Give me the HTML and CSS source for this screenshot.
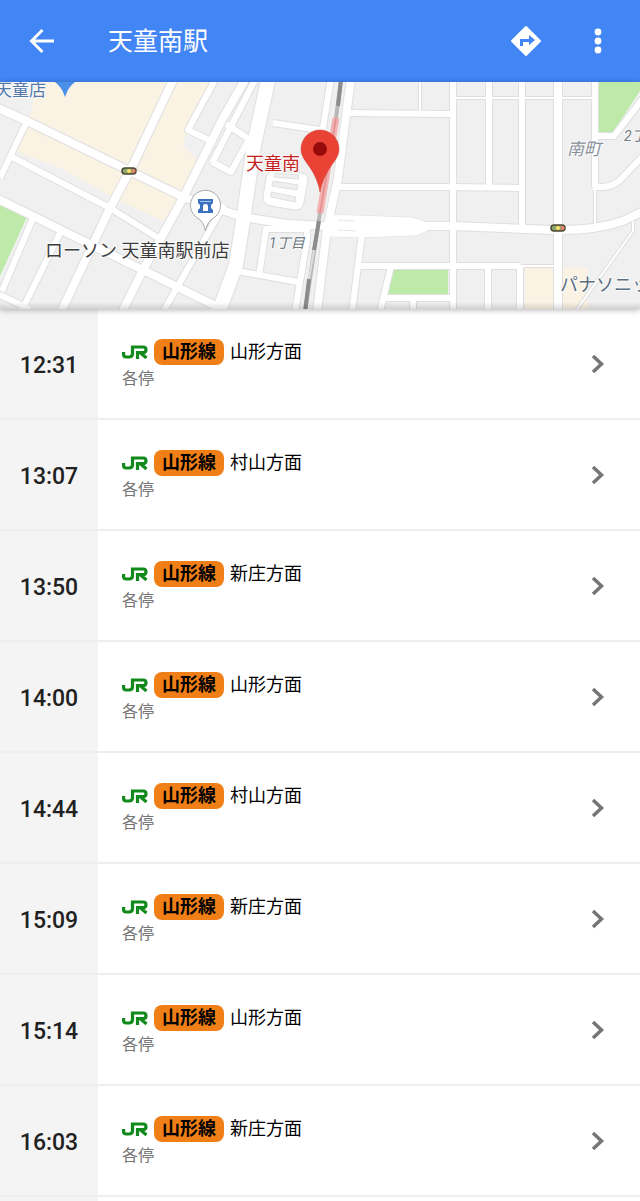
FILE: index.html
```
<!doctype html>
<html lang="ja">
<head>
  <meta charset="utf-8">
  <meta name="viewport" content="width=device-width, initial-scale=1.0">
  <title>天童南駅</title>
  <link rel="stylesheet" href="styles.css">
</head>
<body>

<header class="toolbar">
  <button class="icon-btn" type="button" aria-label="戻る">
    <svg width="28" height="28" viewBox="0 0 28 28" fill="none" stroke="#fff" stroke-width="3"><path d="M26 14H4M14.500 3L3.500 14l11 11"/></svg>
  </button>
  <h1 class="toolbar-title">天童南駅</h1>
  <button class="icon-btn" type="button" aria-label="経路">
    <svg width="32" height="32" viewBox="0 0 32 32"><path fill="#fff" stroke="#fff" stroke-width="2" stroke-linejoin="round" d="M16 2l14 14-14 14L2 16z"/><path fill="#4285f4" d="M10 21v-7h9v-4l6 5-6 5v-3h-6v4z"/></svg>
  </button>
  <button class="icon-btn icon-btn-last" type="button" aria-label="メニュー">
    <svg width="28" height="28" viewBox="0 0 28 28" fill="#fff"><circle cx="14" cy="5" r="3.400"/><circle cx="14" cy="14" r="3.400"/><circle cx="14" cy="23" r="3.400"/></svg>
  </button>
</header>

<div class="map">
  <svg class="map-canvas" viewBox="0 82 640 227" preserveAspectRatio="xMidYMid slice" role="img" aria-label="天童南駅周辺の地図">
    <defs>
      <!-- streets, grouped by width -->
      <g id="lanes">
        <path d="M420 82V112M456 98H593M595 186V226M522 266H556M633 221V231L575 312"/>
      </g>
      <g id="streets">
        <path d="M27 121L0 178M10 156L110 208 163 241M33 218L2 291M60 233L22 310M0 295L30 309M224 205L163 312"/>
        <path d="M216 78L188 130 215 143M212 162L231 172 249 139 226 124M212 163L256 78"/>
        <path d="M273 123L320 130M331 78L322 134M347 113L450 114M337 187H450L520 188"/>
        <path d="M453 80V312M489 80V187M522 80V228M595 80V187M593 187H602Q612 187 620 180L644 155M595 136H614L644 97"/>
        <path d="M362 234L352 312M356 266H520M391 266L380 312M383 298H453M488 266V312M520 266V312M413 298V312"/>
        <path d="M266 229L259 276M237 271L298 282M264 229H307V240L295 312"/>
      </g>
      <g id="roads">
        <path d="M-4 107L27 121 183 197 243 217 287 224 327 226H420L453 226 553 230Q594 231 623 221L644 211"/>
        <path d="M174 78L133 165 110 208 60 314M222 120L183 198 160 240 143 270 122 312M-4 198L33 216 67 233 143 270 224 310M222 120L246 78"/>
        <path d="M351 78L338 178 327 228 317 312M558 78V312"/>
      </g>
      <g id="avenue">
        <path d="M269 76L254 145 243 221 236 265 218 314"/>
      </g>
      <linearGradient id="dim" x1="0" y1="0" x2="0" y2="1">
        <stop offset="0" stop-color="#000" stop-opacity="0"/>
        <stop offset="1" stop-color="#000" stop-opacity=".15"/>
      </linearGradient>
    </defs>

    <rect y="82" width="640" height="228" fill="#f0f0f0"/>

    <!-- shops and parks -->
    <path fill="#faf3e4" d="M37 82H212L188 128 183 146 198 160 180 200 163 221 120 201 60 168 15 151 31 112z"/>
    <path fill="#faf3e4" d="M525 268h30v42h-30zM562 268h26v42h-26z"/>
    <path fill="#bdeaa9" d="M0 203L27 217 0 276zM598 82h42v9l-27 41h-15zM392 270h56v25h-60z"/>

    <!-- casing first, then white fill -->
    <g class="casing">
      <use href="#lanes" stroke-width="4"/>
      <use href="#streets" stroke-width="8"/>
      <use href="#roads" stroke-width="10"/>
      <use href="#avenue" stroke-width="16"/>
      <path d="M332 215L412 218 428 223V230L416 235 360 237 330 236z" stroke-width="2"/>
    </g>
    <g class="surface">
      <use href="#lanes" stroke-width="2"/>
      <use href="#streets" stroke-width="6"/>
      <use href="#roads" stroke-width="8"/>
      <use href="#avenue" stroke-width="14"/>
      <path d="M332 215L412 218 428 223V230L416 235 360 237 330 236z" fill="#fff"/>
    </g>
    <path d="M338 220L354 221M338 230L356 231" stroke="#e6e6e6"/>

    <!-- parking lot -->
    <path d="M274 171L302 173Q308 174 308 180L304 202Q303 211 294 210L271 206Q262 204 263 196L266 178Q267 171 274 171z" fill="#fff" stroke="#dfdfdf"/>
    <path d="M275 173l24 2-1 4-24-2zM273 181l25 4-1 5-25-4zM271 192l25 5-1 5-24-5z" fill="#efefef" stroke="#dfdfdf"/>

    <!-- railway and platform -->
    <path d="M341 80L336 118 320 212 305 312" fill="none" stroke="#b8b8b8" stroke-width="4"/>
    <path d="M341 80L338 106M319 221L314 250M309 279L305 312" fill="none" stroke="#8c8c8c" stroke-width="4"/>
    <path d="M314 250L309 279" stroke="#dedede" stroke-width="2"/>
    <path d="M336 118L320 213" stroke="#f3b3b3" stroke-width="7"/>
    <path d="M336 118L320 213" stroke="#e59393" stroke-width="2"/>

    <!-- traffic lights -->
    <g id="signal">
      <rect x="122" y="168" width="14" height="6" rx="3" fill="#8aa86a" stroke="#4c4633" stroke-width="1.500"/>
      <circle cx="129" cy="171" r="2" fill="#ffe36b"/>
      <circle cx="133.500" cy="171" r="2" fill="#e8806b"/>
    </g>
    <use href="#signal" x="429" y="57"/>

    <path fill="#4a90e8" d="M55 82h20q-6 5-8 10l-2 5-2-5q-2-5-8-10z"/>
    <text class="label label-shop" x="-5" y="96">天童店</text>

    <!-- convenience store -->
    <path fill="#fff" stroke="#a9a9a9" d="M205.500 231q-2-10-8-13a15 15 0 1 1 16 0q-6 3-8 13z"/>
    <path fill="#3b71c1" d="M198 199h15v4l-2 2v3l2 2v3h-15v-3l2-2v-3l-2-2z"/>
    <path fill="#a9c3ea" d="M200 201h11v1h-11z"/>
    <path fill="#fff" d="M203 211v-5q0-2 2.500-2t2.500 2v5z"/>
    <text class="label label-store" x="45" y="257">ローソン 天童南駅前店</text>

    <text class="label label-area" x="269" y="248">1丁目</text>
    <text class="label label-town" x="567" y="155">南町</text>
    <text class="label label-area" x="624" y="141">2丁目</text>
    <text class="label label-office" x="560" y="291">パナソニック</text>

    <!-- station pin -->
    <text class="label label-station" x="246" y="170">天童南</text>
    <path fill="#ea4335" stroke="#c83a2d" stroke-width=".500" d="M320 192Q318 179 309 166C303 158 301 154 301 149A19 19 0 0 1 339 149C339 154 337 158 331 166Q322 179 320 192z"/>
    <circle cx="320" cy="149" r="7" fill="#960a0a"/>

    <rect y="302" width="640" height="8" fill="url(#dim)"/>
  </svg>
</div>

<!-- logo shared by every departure -->
<svg width="0" height="0" class="sprite" aria-hidden="true">
  <symbol id="jr" viewBox="0 0 26 14">
    <path fill="none" stroke="#118a1b" stroke-width="3.200" d="M1.600 7v2.500q0 2.500 2.500 2.500H7q3.500 0 3.500-3.500V2H21q3 0 3 2.800t-3 2.800h-5.500M15.500 6V14M18 7.500l6.500 5.500"/>
  </symbol>
  <symbol id="chevron" viewBox="0 0 20 24">
    <path fill="none" stroke="#757575" stroke-width="3.500" d="M5 4l8.500 8L5 20"/>
  </symbol>
</svg>

<ul class="board">
  <li><a class="departure" href="#">
    <time class="departure-time">12:31</time>
    <span class="departure-info">
      <span class="departure-line"><svg class="jr" role="img" aria-label="JR"><use href="#jr"/></svg><b class="badge">山形線</b>山形方面</span>
      <span class="departure-type">各停</span>
    </span>
    <svg class="chevron"><use href="#chevron"/></svg>
  </a></li>
  <li><a class="departure" href="#">
    <time class="departure-time">13:07</time>
    <span class="departure-info">
      <span class="departure-line"><svg class="jr" role="img" aria-label="JR"><use href="#jr"/></svg><b class="badge">山形線</b>村山方面</span>
      <span class="departure-type">各停</span>
    </span>
    <svg class="chevron"><use href="#chevron"/></svg>
  </a></li>
  <li><a class="departure" href="#">
    <time class="departure-time">13:50</time>
    <span class="departure-info">
      <span class="departure-line"><svg class="jr" role="img" aria-label="JR"><use href="#jr"/></svg><b class="badge">山形線</b>新庄方面</span>
      <span class="departure-type">各停</span>
    </span>
    <svg class="chevron"><use href="#chevron"/></svg>
  </a></li>
  <li><a class="departure" href="#">
    <time class="departure-time">14:00</time>
    <span class="departure-info">
      <span class="departure-line"><svg class="jr" role="img" aria-label="JR"><use href="#jr"/></svg><b class="badge">山形線</b>山形方面</span>
      <span class="departure-type">各停</span>
    </span>
    <svg class="chevron"><use href="#chevron"/></svg>
  </a></li>
  <li><a class="departure" href="#">
    <time class="departure-time">14:44</time>
    <span class="departure-info">
      <span class="departure-line"><svg class="jr" role="img" aria-label="JR"><use href="#jr"/></svg><b class="badge">山形線</b>村山方面</span>
      <span class="departure-type">各停</span>
    </span>
    <svg class="chevron"><use href="#chevron"/></svg>
  </a></li>
  <li><a class="departure" href="#">
    <time class="departure-time">15:09</time>
    <span class="departure-info">
      <span class="departure-line"><svg class="jr" role="img" aria-label="JR"><use href="#jr"/></svg><b class="badge">山形線</b>新庄方面</span>
      <span class="departure-type">各停</span>
    </span>
    <svg class="chevron"><use href="#chevron"/></svg>
  </a></li>
  <li><a class="departure" href="#">
    <time class="departure-time">15:14</time>
    <span class="departure-info">
      <span class="departure-line"><svg class="jr" role="img" aria-label="JR"><use href="#jr"/></svg><b class="badge">山形線</b>山形方面</span>
      <span class="departure-type">各停</span>
    </span>
    <svg class="chevron"><use href="#chevron"/></svg>
  </a></li>
  <li><a class="departure" href="#">
    <time class="departure-time">16:03</time>
    <span class="departure-info">
      <span class="departure-line"><svg class="jr" role="img" aria-label="JR"><use href="#jr"/></svg><b class="badge">山形線</b>新庄方面</span>
      <span class="departure-type">各停</span>
    </span>
    <svg class="chevron"><use href="#chevron"/></svg>
  </a></li>
</ul>

</body>
</html>
```
FILE: styles.css
```
* {
  box-sizing: border-box;
}

body {
  background-color: #fff;
  color: #000;
  display: flex;
  flex-direction: column;
  font-family: Roboto, "Noto Sans CJK JP", sans-serif;
  margin: 0;
  min-height: 100vh;
}

/* Top bar */

.toolbar {
  align-items: center;
  background-color: #4285f4;
  color: #fff;
  display: flex;
  height: 82px;
  padding: 0 18px;
}

.toolbar-title {
  flex: 1;
  font-size: 25px;
  font-weight: 400;
  line-height: 36px;
  margin: 0 0 0 42px;
  padding-top: 2px;
}

.icon-btn {
  align-items: center;
  background: none;
  border: 0;
  cursor: pointer;
  display: flex;
  height: 48px;
  justify-content: center;
  padding: 0;
  width: 48px;
}

.icon-btn-last {
  margin-left: 24px;
}

/* Map */

.map {
  box-shadow: 0 1px 6px rgba(0, 0, 0, 0.3);
  height: 227px;
  z-index: 1;
}

.map-canvas {
  display: block;
  height: 100%;
  width: 100%;
}

.casing,
.surface {
  fill: none;
  stroke-linejoin: round;
}

.casing {
  stroke: #dfdfdf;
}

.surface {
  stroke: #fff;
}

.label {
  fill: #3c3c3c;
  font-size: 17px;
  paint-order: stroke;
  stroke: #fff;
  stroke-opacity: 0.7;
  stroke-width: 2px;
}

.label-shop {
  fill: #5379ac;
}

.label-store {
  font-size: 18px;
}

.label-station {
  fill: #c5221f;
  font-size: 18px;
}

.label-area {
  fill: #6f7780;
  font-size: 14px;
  font-style: italic;
}

.label-town {
  fill: #8a919c;
  font-size: 17px;
  font-style: italic;
}

.label-office {
  fill: #5b7083;
  font-size: 18px;
}

/* Departures */

.sprite {
  position: absolute;
}

.board {
  background: linear-gradient(to right, #f4f4f4 98px, #fff 98px);
  flex: 1;
  list-style: none;
  margin: 0;
  padding: 0;
}

.departure {
  align-items: center;
  border-bottom: 2px solid #eee;
  color: inherit;
  display: flex;
  height: 111px;
  padding-right: 32px;
  text-decoration: none;
}

.departure-time {
  color: #212121;
  font-size: 23px;
  font-weight: 500;
  padding-top: 3px;
  text-align: center;
  width: 98px;
}

.departure-info {
  flex: 1;
  padding: 4px 0 0 24px;
}

.departure-line {
  align-items: center;
  display: flex;
  font-size: 18px;
  line-height: 26px;
}

.jr {
  height: 14px;
  margin-right: 6px;
  width: 26px;
}

.badge {
  background-color: #f07f17;
  border-radius: 8px;
  margin-right: 6px;
  padding: 0 8px;
}

.departure-type {
  color: #757575;
  display: block;
  font-size: 16px;
  line-height: 28px;
}

.chevron {
  height: 24px;
  width: 20px;
}
```
